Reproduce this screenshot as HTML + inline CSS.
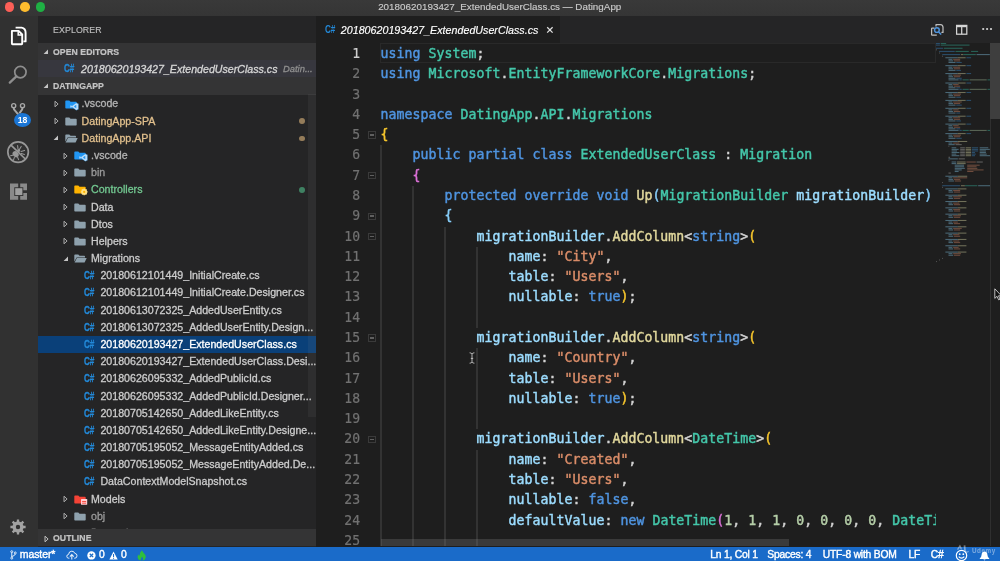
<!DOCTYPE html>
<html lang="en"><head><meta charset="utf-8"><title>20180620193427_ExtendedUserClass.cs — DatingApp</title>
<style>
html,body{margin:0;padding:0;background:#1e1e1e;}
body{width:1000px;height:561px;overflow:hidden;position:relative;font-family:"Liberation Sans",sans-serif;-webkit-font-smoothing:antialiased;}
.abs{position:absolute;}
#win{will-change:transform;position:absolute;left:0;top:0;width:1000px;height:561px;overflow:hidden;background:#1e1e1e;}
#title{position:absolute;left:0;top:0;width:1000px;height:15.5px;background:linear-gradient(#393939,#353535);}
#title .t{position:absolute;left:0;width:1000px;top:0;height:15.5px;line-height:14.2px;text-align:center;color:#cacaca;-webkit-text-stroke:0.15px;font-size:9.8px;letter-spacing:0.03px;text-indent:-0.5px;}
.tl{position:absolute;top:2.2px;width:9.6px;height:9.6px;border-radius:50%;}
#abar{position:absolute;left:0;top:15.5px;width:37.5px;height:531.0px;background:#313131;}
#side{position:absolute;left:37.5px;top:15.5px;width:278.1px;height:531.0px;background:#252526;overflow:hidden;}
.hdr{position:absolute;left:0;width:100%;background:#343435;color:#c4c4c4;font-weight:bold;font-size:8.7px;letter-spacing:0.05px;-webkit-text-stroke:0.2px;}
.hdr span{position:absolute;left:15.5px;top:0;}
.row{position:absolute;left:0;width:100%;height:17.18px;line-height:17.18px;font-size:10.65px;color:#cccccc;white-space:nowrap;-webkit-text-stroke:0.3px;}
.row .lbl{position:absolute;top:0;}
.cs{position:absolute;top:0;font-size:10.2px;font-weight:bold;color:#2389d8;letter-spacing:-0.2px;transform:scaleX(0.8);transform-origin:0 50%;}
.tw{position:absolute;width:0;height:0;}
#tabs{position:absolute;left:315.6px;top:15.5px;width:684.4px;height:27.700000000000003px;background:#252526;}
#tab{position:absolute;left:0;top:0;height:27.700000000000003px;width:244.7px;background:#1e1e1e;}
#editor{position:absolute;left:315.6px;top:43.2px;width:684.4px;height:503.3px;background:#1e1e1e;overflow:hidden;}
.ln{position:absolute;left:0;width:44.5px;text-align:right;color:#858585;font-family:"DejaVu Sans Mono","Liberation Mono",monospace;font-size:13.1px;height:20.29px;line-height:20.29px;-webkit-text-stroke:0.2px;transform:scaleY(1.08);transform-origin:50% 72%;}
.cl{position:absolute;left:65.0px;white-space:pre;font-family:"DejaVu Sans Mono","Liberation Mono",monospace;font-size:13.2px;letter-spacing:0.053px;height:20.29px;line-height:20.29px;color:#d4d4d4;-webkit-text-stroke:0.45px;}
.g{position:absolute;width:1.4px;background:#333333;}
.fold{position:absolute;left:52.9px;width:7.4px;height:7.4px;border:1px solid #3a3a3a;box-sizing:border-box;}
.fold:after{content:"";position:absolute;left:0.7px;right:0.7px;top:1.9px;height:1.6px;background:#606060;}
#status{position:absolute;left:0;top:546.5px;width:1000px;height:14.5px;background:#1a6bc9;color:#ffffff;font-size:10.3px;letter-spacing:-0.2px;white-space:nowrap;}
#status span{position:absolute;top:0;line-height:16.8px;-webkit-text-stroke:0.38px;}

.kw{color:#4f94e0}
.ty{color:#44c7aa}
.var{color:#9cdcfe}
.str{color:#d98c68}
.fn{color:#e0d79c}
.num{color:#b5cea8}
.w{color:#d4d4d4}
.b1{color:#f7c62c}
.b2{color:#da70d6}
.b3{color:#87cefa}
</style></head><body><div id="win">
<div id="title"><div class="tl" style="left:4.7px;background:#fc5f57"></div><div class="tl" style="left:20.2px;background:#fdbc2e"></div><div class="tl" style="left:35.7px;background:#1fb044"></div>
<div class="t">20180620193427_ExtendedUserClass.cs — DatingApp</div></div>
<div id="abar">
<svg class="abs" style="left:9.00px;top:9.20px;" width="20" height="21" viewBox="0 0 20 21"><path d="M6.6 2.6 L12.6 2.6 Q16.8 3.4 16.6 8 L16.6 16.4 L14.4 16.4" fill="none" stroke="#ffffff" stroke-width="1.9" stroke-linejoin="round"/><path d="M2.9 5.9 L9.6 5.9 L13.2 9.5 L13.2 18.6 Q13.2 19.2 12.6 19.2 L3.5 19.2 Q2.9 19.2 2.9 18.6 Z" fill="#313131" stroke="#ffffff" stroke-width="1.9" stroke-linejoin="round"/><path d="M9.2 6.2 L9.2 9.9 L13 9.9" fill="none" stroke="#ffffff" stroke-width="1.5"/></svg>
<svg class="abs" style="left:7.00px;top:46.10px;" width="24" height="24" viewBox="0 0 24 24"><circle cx="13.4" cy="10.1" r="5.7" fill="none" stroke="#8e8e8e" stroke-width="1.7"/><path d="M9.4 14.4 L2.8 20.6" stroke="#8e8e8e" stroke-width="2.3" stroke-linecap="round"/></svg>
<svg class="abs" style="left:8.00px;top:83.50px;" width="24" height="20" viewBox="0 0 24 20"><path d="M5.7 8.4 L6 10.4 L10.4 15.6 M14.5 8.4 L14.2 10.4 L11.4 14.4" fill="none" stroke="#a8a8a8" stroke-width="1.9" stroke-linejoin="round"/><circle cx="5.7" cy="6.7" r="2.05" fill="#313131" stroke="#a8a8a8" stroke-width="1.35"/><circle cx="14.5" cy="6.7" r="2.05" fill="#313131" stroke="#a8a8a8" stroke-width="1.35"/></svg>
<div class="abs" style="left:13.9px;top:97.8px;width:17.3px;height:14.2px;border-radius:50%;background:#1a76d6;color:#fff;font-size:8.7px;font-weight:bold;line-height:14.6px;text-align:center;letter-spacing:-0.1px">18</div>
<svg class="abs" style="left:6.00px;top:124.50px;" width="24" height="24" viewBox="0 0 24 24"><circle cx="12.1" cy="12.1" r="10.25" fill="none" stroke="#989898" stroke-width="1.7"/><path d="M5 5.2 L19.3 19" stroke="#989898" stroke-width="1.7"/><ellipse cx="9.6" cy="14.2" rx="2.7" ry="3.4" fill="#989898" transform="rotate(-42 9.6 14.2)"/><circle cx="12.6" cy="10.6" r="1.5" fill="#989898"/><path d="M13.4 9.4 L15.2 6.4 M12 9 L11.6 5.6 M15 11.4 L18.6 10.4 M15.4 13.4 L18.4 14.6 M6.8 15.2 L4.6 15.8 M8.4 17.4 L7.6 19.6 M11.6 17.2 L12.6 19.6" stroke="#989898" stroke-width="1.05" stroke-linecap="round"/></svg>
<svg class="abs" style="left:9.00px;top:166.50px;" width="20" height="20" viewBox="0 0 20 20"><path d="M1 1.4 H9.2 V5.3 H5.3 V13.9 H9.2 V17.8 H1 Z" fill="#8a8a8a"/><path d="M11.2 1.4 H18 V8.3 H14.3 V5.3 H11.2 Z" fill="#8a8a8a"/><path d="M18 10.9 V17.8 H11.2 V13.9 H14.3 V10.9 Z" fill="#8a8a8a"/><rect x="6.2" y="6.2" width="7.2" height="6.9" fill="#a0a0a0"/></svg>
<svg class="abs" style="left:8.00px;top:501.70px;" width="20" height="20" viewBox="0 0 20 20"><path d="M8.82 4.53 L8.86 2.39 L11.14 2.39 L11.18 4.53 L13.04 5.30 L14.57 3.81 L16.19 5.43 L14.70 6.96 L15.47 8.82 L17.61 8.86 L17.61 11.14 L15.47 11.18 L14.70 13.04 L16.19 14.57 L14.57 16.19 L13.04 14.70 L11.18 15.47 L11.14 17.61 L8.86 17.61 L8.82 15.47 L6.96 14.70 L5.43 16.19 L3.81 14.57 L5.30 13.04 L4.53 11.18 L2.39 11.14 L2.39 8.86 L4.53 8.82 L5.30 6.96 L3.81 5.43 L5.43 3.81 L6.96 5.30 Z M7.80 10.00 a2.20 2.20 0 1 0 4.40 0 a2.20 2.20 0 1 0 -4.40 0 Z" fill="#a2a2a2" fill-rule="evenodd"/></svg>
</div>
<div id="side">
<div class="abs" style="left:15.5px;top:8.3px;font-size:8.8px;color:#bdbdbd;letter-spacing:0.1px;line-height:12px;-webkit-text-stroke:0.15px;">EXPLORER</div>
<div class="hdr" style="top:27.9px;height:16.9px;line-height:18.3px"><svg class="abs" style="left:5.6px;top:5.9px" width="6" height="6" viewBox="0 0 6 6"><path d="M5 0.6 L5 5 L0.6 5 Z" fill="#c5c5c5"/></svg><span>OPEN EDITORS</span></div>
<div class="row" style="top:44.6px;background:#37373e;height:17.6px;line-height:18.1px">
<span class="cs" style="left:26.5px">C#</span><span class="lbl" style="left:43.6px;font-style:italic;color:#d6d6d6;letter-spacing:0px">20180620193427_ExtendedUserClass.cs</span>
<span class="lbl" style="left:245.5px;font-style:italic;color:#8f8f8f;font-size:9.4px">Datin...</span></div>
<div class="hdr" style="top:61.9px;height:17.2px;line-height:18.2px"><svg class="abs" style="left:5.6px;top:5.9px" width="6" height="6" viewBox="0 0 6 6"><path d="M5 0.6 L5 5 L0.6 5 Z" fill="#c5c5c5"/></svg><span>DATINGAPP</span></div>
<div class="abs" style="left:0;top:78.9px;width:100%;height:435.0px;overflow:hidden">
<div class="row" style="top:1.10px;">
<svg class="abs" style="left:16.4px;top:4.5px" width="6" height="8" viewBox="0 0 6 8"><path d="M1 1.2 L4.1 4 L1 6.8 Z" fill="none" stroke="#b0b0b0" stroke-width="0.95" stroke-linejoin="round"/></svg>
<span class="abs" style="left:27.2px;top:4.1px;line-height:0"><svg width="14" height="11" viewBox="0 0 14 11"><path d="M0.3 1.2 Q0.3 0.4 1.1 0.4 L4.3 0.4 L5.5 1.7 L10.9 1.7 Q11.7 1.7 11.7 2.5 L11.7 7.8 Q11.7 8.6 10.9 8.6 L1.1 8.6 Q0.3 8.6 0.3 7.8 Z" fill="#2196f3"/><path d="M11.2 2.9 L13.4 3.8 L13.4 9.3 L11.2 10.2 L7 6.9 L5.9 7.8 L5.2 7.4 L5.2 5.6 L5.9 5.2 L7 6.1 Z M11.1 5.1 L9 6.55 L11.1 8 Z" fill="#bfe0fb" stroke="#2196f3" stroke-width="0.3"/></svg></span>
<span class="lbl" style="left:44.1px;color:#b4b4b4">.vscode</span>
</div>
<div class="row" style="top:18.28px;">
<svg class="abs" style="left:16.4px;top:4.5px" width="6" height="8" viewBox="0 0 6 8"><path d="M1 1.2 L4.1 4 L1 6.8 Z" fill="none" stroke="#b0b0b0" stroke-width="0.95" stroke-linejoin="round"/></svg>
<span class="abs" style="left:27.2px;top:4.1px;line-height:0"><svg width="12" height="10" viewBox="0 0 12 10"><path d="M0.3 1.2 Q0.3 0.4 1.1 0.4 L4.3 0.4 L5.5 1.7 L10.9 1.7 Q11.7 1.7 11.7 2.5 L11.7 7.8 Q11.7 8.6 10.9 8.6 L1.1 8.6 Q0.3 8.6 0.3 7.8 Z" fill="#8ea1ad"/></svg></span>
<span class="lbl" style="left:44.1px;color:#e2c08d">DatingApp-SPA</span>
<span class="abs" style="left:261.5px;top:5.7px;width:5.8px;height:5.8px;border-radius:50%;background:#947c5a"></span>
</div>
<div class="row" style="top:35.46px;">
<svg class="abs" style="left:15.8px;top:5.6px" width="6" height="6" viewBox="0 0 6 6"><path d="M5 0.6 L5 5 L0.6 5 Z" fill="#c5c5c5"/></svg>
<span class="abs" style="left:27.2px;top:4.1px;line-height:0"><svg width="13" height="10" viewBox="0 0 13 10"><path d="M0.3 1.2 Q0.3 0.4 1.1 0.4 L4.3 0.4 L5.5 1.7 L10.3 1.7 Q11 1.7 11 2.5 L11 3.4 L2.6 3.4 L0.3 7.8 Z" fill="#8ea1ad"/><path d="M2.9 4.1 L12.7 4.1 L10.6 8.6 L0.6 8.6 Z" fill="#8ea1ad"/></svg></span>
<span class="lbl" style="left:44.1px;color:#e2c08d">DatingApp.API</span>
<span class="abs" style="left:261.5px;top:5.7px;width:5.8px;height:5.8px;border-radius:50%;background:#947c5a"></span>
</div>
<div class="row" style="top:52.64px;">
<svg class="abs" style="left:25.8px;top:4.5px" width="6" height="8" viewBox="0 0 6 8"><path d="M1 1.2 L4.1 4 L1 6.8 Z" fill="none" stroke="#b0b0b0" stroke-width="0.95" stroke-linejoin="round"/></svg>
<span class="abs" style="left:36.6px;top:4.1px;line-height:0"><svg width="14" height="11" viewBox="0 0 14 11"><path d="M0.3 1.2 Q0.3 0.4 1.1 0.4 L4.3 0.4 L5.5 1.7 L10.9 1.7 Q11.7 1.7 11.7 2.5 L11.7 7.8 Q11.7 8.6 10.9 8.6 L1.1 8.6 Q0.3 8.6 0.3 7.8 Z" fill="#2196f3"/><path d="M11.2 2.9 L13.4 3.8 L13.4 9.3 L11.2 10.2 L7 6.9 L5.9 7.8 L5.2 7.4 L5.2 5.6 L5.9 5.2 L7 6.1 Z M11.1 5.1 L9 6.55 L11.1 8 Z" fill="#bfe0fb" stroke="#2196f3" stroke-width="0.3"/></svg></span>
<span class="lbl" style="left:53.5px;color:#b4b4b4">.vscode</span>
</div>
<div class="row" style="top:69.82px;">
<svg class="abs" style="left:25.8px;top:4.5px" width="6" height="8" viewBox="0 0 6 8"><path d="M1 1.2 L4.1 4 L1 6.8 Z" fill="none" stroke="#b0b0b0" stroke-width="0.95" stroke-linejoin="round"/></svg>
<span class="abs" style="left:36.6px;top:4.1px;line-height:0"><svg width="12" height="10" viewBox="0 0 12 10"><path d="M0.3 1.2 Q0.3 0.4 1.1 0.4 L4.3 0.4 L5.5 1.7 L10.9 1.7 Q11.7 1.7 11.7 2.5 L11.7 7.8 Q11.7 8.6 10.9 8.6 L1.1 8.6 Q0.3 8.6 0.3 7.8 Z" fill="#8ea1ad"/></svg></span>
<span class="lbl" style="left:53.5px;color:#9a9a9a">bin</span>
</div>
<div class="row" style="top:87.00px;">
<svg class="abs" style="left:25.8px;top:4.5px" width="6" height="8" viewBox="0 0 6 8"><path d="M1 1.2 L4.1 4 L1 6.8 Z" fill="none" stroke="#b0b0b0" stroke-width="0.95" stroke-linejoin="round"/></svg>
<span class="abs" style="left:36.6px;top:4.1px;line-height:0"><svg width="14" height="11" viewBox="0 0 14 11"><path d="M0.3 1.2 Q0.3 0.4 1.1 0.4 L4.3 0.4 L5.5 1.7 L10.9 1.7 Q11.7 1.7 11.7 2.5 L11.7 7.8 Q11.7 8.6 10.9 8.6 L1.1 8.6 Q0.3 8.6 0.3 7.8 Z" fill="#ffb300"/><circle cx="10.2" cy="6.9" r="2.9" fill="#ffe082"/><circle cx="10.2" cy="6.9" r="1.1" fill="#ffb300"/><g stroke="#ffe082" stroke-width="1.3"><path d="M10.2 3.5 V10.3 M6.8 6.9 H13.6 M7.8 4.5 L12.6 9.3 M12.6 4.5 L7.8 9.3"/></g><circle cx="10.2" cy="6.9" r="1.1" fill="#ffb300"/></svg></span>
<span class="lbl" style="left:53.5px;color:#73c991">Controllers</span>
<span class="abs" style="left:261.5px;top:5.7px;width:5.8px;height:5.8px;border-radius:50%;background:#3f8162"></span>
</div>
<div class="row" style="top:104.18px;">
<svg class="abs" style="left:25.8px;top:4.5px" width="6" height="8" viewBox="0 0 6 8"><path d="M1 1.2 L4.1 4 L1 6.8 Z" fill="none" stroke="#b0b0b0" stroke-width="0.95" stroke-linejoin="round"/></svg>
<span class="abs" style="left:36.6px;top:4.1px;line-height:0"><svg width="12" height="10" viewBox="0 0 12 10"><path d="M0.3 1.2 Q0.3 0.4 1.1 0.4 L4.3 0.4 L5.5 1.7 L10.9 1.7 Q11.7 1.7 11.7 2.5 L11.7 7.8 Q11.7 8.6 10.9 8.6 L1.1 8.6 Q0.3 8.6 0.3 7.8 Z" fill="#8ea1ad"/></svg></span>
<span class="lbl" style="left:53.5px;color:#cccccc">Data</span>
</div>
<div class="row" style="top:121.36px;">
<svg class="abs" style="left:25.8px;top:4.5px" width="6" height="8" viewBox="0 0 6 8"><path d="M1 1.2 L4.1 4 L1 6.8 Z" fill="none" stroke="#b0b0b0" stroke-width="0.95" stroke-linejoin="round"/></svg>
<span class="abs" style="left:36.6px;top:4.1px;line-height:0"><svg width="12" height="10" viewBox="0 0 12 10"><path d="M0.3 1.2 Q0.3 0.4 1.1 0.4 L4.3 0.4 L5.5 1.7 L10.9 1.7 Q11.7 1.7 11.7 2.5 L11.7 7.8 Q11.7 8.6 10.9 8.6 L1.1 8.6 Q0.3 8.6 0.3 7.8 Z" fill="#8ea1ad"/></svg></span>
<span class="lbl" style="left:53.5px;color:#cccccc">Dtos</span>
</div>
<div class="row" style="top:138.54px;">
<svg class="abs" style="left:25.8px;top:4.5px" width="6" height="8" viewBox="0 0 6 8"><path d="M1 1.2 L4.1 4 L1 6.8 Z" fill="none" stroke="#b0b0b0" stroke-width="0.95" stroke-linejoin="round"/></svg>
<span class="abs" style="left:36.6px;top:4.1px;line-height:0"><svg width="12" height="10" viewBox="0 0 12 10"><path d="M0.3 1.2 Q0.3 0.4 1.1 0.4 L4.3 0.4 L5.5 1.7 L10.9 1.7 Q11.7 1.7 11.7 2.5 L11.7 7.8 Q11.7 8.6 10.9 8.6 L1.1 8.6 Q0.3 8.6 0.3 7.8 Z" fill="#8ea1ad"/></svg></span>
<span class="lbl" style="left:53.5px;color:#cccccc">Helpers</span>
</div>
<div class="row" style="top:155.72px;">
<svg class="abs" style="left:25.2px;top:5.6px" width="6" height="6" viewBox="0 0 6 6"><path d="M5 0.6 L5 5 L0.6 5 Z" fill="#c5c5c5"/></svg>
<span class="abs" style="left:36.6px;top:4.1px;line-height:0"><svg width="13" height="10" viewBox="0 0 13 10"><path d="M0.3 1.2 Q0.3 0.4 1.1 0.4 L4.3 0.4 L5.5 1.7 L10.3 1.7 Q11 1.7 11 2.5 L11 3.4 L2.6 3.4 L0.3 7.8 Z" fill="#8ea1ad"/><path d="M2.9 4.1 L12.7 4.1 L10.6 8.6 L0.6 8.6 Z" fill="#8ea1ad"/></svg></span>
<span class="lbl" style="left:53.5px;color:#cccccc">Migrations</span>
</div>
<div class="row" style="top:172.90px;">
<span class="cs" style="left:46.4px">C#</span>
<span class="lbl" style="left:62.9px;color:#cccccc">20180612101449_InitialCreate.cs</span>
</div>
<div class="row" style="top:190.08px;">
<span class="cs" style="left:46.4px">C#</span>
<span class="lbl" style="left:62.9px;color:#cccccc">20180612101449_InitialCreate.Designer.cs</span>
</div>
<div class="row" style="top:207.26px;">
<span class="cs" style="left:46.4px">C#</span>
<span class="lbl" style="left:62.9px;color:#cccccc">20180613072325_AddedUserEntity.cs</span>
</div>
<div class="row" style="top:224.44px;">
<span class="cs" style="left:46.4px">C#</span>
<span class="lbl" style="left:62.9px;color:#cccccc">20180613072325_AddedUserEntity.Design...</span>
</div>
<div class="row" style="top:241.62px;background:#0a4079;">
<span class="cs" style="left:46.4px">C#</span>
<span class="lbl" style="left:62.9px;color:#ffffff">20180620193427_ExtendedUserClass.cs</span>
</div>
<div class="row" style="top:258.80px;">
<span class="cs" style="left:46.4px">C#</span>
<span class="lbl" style="left:62.9px;color:#cccccc">20180620193427_ExtendedUserClass.Desi...</span>
</div>
<div class="row" style="top:275.98px;">
<span class="cs" style="left:46.4px">C#</span>
<span class="lbl" style="left:62.9px;color:#cccccc">20180626095332_AddedPublicId.cs</span>
</div>
<div class="row" style="top:293.16px;">
<span class="cs" style="left:46.4px">C#</span>
<span class="lbl" style="left:62.9px;color:#cccccc">20180626095332_AddedPublicId.Designer...</span>
</div>
<div class="row" style="top:310.34px;">
<span class="cs" style="left:46.4px">C#</span>
<span class="lbl" style="left:62.9px;color:#cccccc">20180705142650_AddedLikeEntity.cs</span>
</div>
<div class="row" style="top:327.52px;">
<span class="cs" style="left:46.4px">C#</span>
<span class="lbl" style="left:62.9px;color:#cccccc">20180705142650_AddedLikeEntity.Designe...</span>
</div>
<div class="row" style="top:344.70px;">
<span class="cs" style="left:46.4px">C#</span>
<span class="lbl" style="left:62.9px;color:#cccccc">20180705195052_MessageEntityAdded.cs</span>
</div>
<div class="row" style="top:361.88px;">
<span class="cs" style="left:46.4px">C#</span>
<span class="lbl" style="left:62.9px;color:#cccccc">20180705195052_MessageEntityAdded.De...</span>
</div>
<div class="row" style="top:379.06px;">
<span class="cs" style="left:46.4px">C#</span>
<span class="lbl" style="left:62.9px;color:#cccccc">DataContextModelSnapshot.cs</span>
</div>
<div class="row" style="top:396.24px;">
<svg class="abs" style="left:25.8px;top:4.5px" width="6" height="8" viewBox="0 0 6 8"><path d="M1 1.2 L4.1 4 L1 6.8 Z" fill="none" stroke="#b0b0b0" stroke-width="0.95" stroke-linejoin="round"/></svg>
<span class="abs" style="left:36.6px;top:4.1px;line-height:0"><svg width="14" height="11" viewBox="0 0 14 11"><path d="M0.3 1.2 Q0.3 0.4 1.1 0.4 L4.3 0.4 L5.5 1.7 L10.9 1.7 Q11.7 1.7 11.7 2.5 L11.7 7.8 Q11.7 8.6 10.9 8.6 L1.1 8.6 Q0.3 8.6 0.3 7.8 Z" fill="#f44336"/><rect x="7" y="4" width="6.2" height="5.8" rx="0.6" fill="#ffcdd2"/><rect x="8.1" y="6" width="4" height="0.9" fill="#f44336"/><rect x="8.1" y="7.7" width="4" height="0.9" fill="#f44336"/></svg></span>
<span class="lbl" style="left:53.5px;color:#cccccc">Models</span>
</div>
<div class="row" style="top:413.42px;">
<svg class="abs" style="left:25.8px;top:4.5px" width="6" height="8" viewBox="0 0 6 8"><path d="M1 1.2 L4.1 4 L1 6.8 Z" fill="none" stroke="#b0b0b0" stroke-width="0.95" stroke-linejoin="round"/></svg>
<span class="abs" style="left:36.6px;top:4.1px;line-height:0"><svg width="12" height="10" viewBox="0 0 12 10"><path d="M0.3 1.2 Q0.3 0.4 1.1 0.4 L4.3 0.4 L5.5 1.7 L10.9 1.7 Q11.7 1.7 11.7 2.5 L11.7 7.8 Q11.7 8.6 10.9 8.6 L1.1 8.6 Q0.3 8.6 0.3 7.8 Z" fill="#8ea1ad"/></svg></span>
<span class="lbl" style="left:53.5px;color:#9a9a9a">obj</span>
</div>
<div class="row" style="top:430.60px;">
<svg class="abs" style="left:25.8px;top:4.5px" width="6" height="8" viewBox="0 0 6 8"><path d="M1 1.2 L4.1 4 L1 6.8 Z" fill="none" stroke="#b0b0b0" stroke-width="0.95" stroke-linejoin="round"/></svg>
<span class="abs" style="left:36.6px;top:4.1px;line-height:0"><svg width="12" height="10" viewBox="0 0 12 10"><path d="M0.3 1.2 Q0.3 0.4 1.1 0.4 L4.3 0.4 L5.5 1.7 L10.9 1.7 Q11.7 1.7 11.7 2.5 L11.7 7.8 Q11.7 8.6 10.9 8.6 L1.1 8.6 Q0.3 8.6 0.3 7.8 Z" fill="#8ea1ad"/></svg></span>
<span class="lbl" style="left:53.5px;color:#cccccc">Properties</span>
</div>
</div>
<div class="abs" style="left:270.5px;top:78.9px;width:7.6px;height:323.1px;background:rgba(140,140,140,0.09)"></div>
<div class="hdr" style="top:513.9px;height:17.1px;line-height:18.3px"><svg class="abs" style="left:6.0px;top:5.2px" width="6" height="8" viewBox="0 0 6 8"><path d="M1 1.2 L4.1 4 L1 6.8 Z" fill="none" stroke="#c5c5c5" stroke-width="0.95" stroke-linejoin="round"/></svg><span>OUTLINE</span></div>
</div>
<div id="tabs"><div id="tab">
<span class="cs" style="left:9.1px;top:0;line-height:28.6px;">C#</span>
<span class="abs" style="left:25.2px;top:0;line-height:28.6px;font-size:10.7px;font-style:italic;color:#ffffff;letter-spacing:0.01px;white-space:nowrap;-webkit-text-stroke:0.15px">20180620193427_ExtendedUserClass.cs</span>
<svg class="abs" style="left:230.1px;top:10.5px" width="8" height="8" viewBox="0 0 8 8"><path d="M1.2 1.2 L6.6 6.6 M6.6 1.2 L1.2 6.6" stroke="#e0e0e0" stroke-width="1.25"/></svg>
</div>
<svg class="abs" style="left:614.20px;top:7.70px;" width="15" height="14" viewBox="0 0 15 14"><path d="M6 3.6 V1.6 H10.6 Q12.9 1.8 13 4.2 V9.4 H11.4" fill="none" stroke="#bdbdbd" stroke-width="1.25" stroke-linejoin="round"/><path d="M4.4 5 H2.2 Q1.6 5 1.6 5.6 V11.6 Q1.6 12.2 2.2 12.2 H6.8" fill="none" stroke="#bdbdbd" stroke-width="1.25"/><circle cx="6.9" cy="7" r="2.35" fill="none" stroke="#4f94dc" stroke-width="1.45"/><path d="M8.7 8.9 L11.2 11.5" stroke="#4f94dc" stroke-width="1.5"/></svg>
<svg class="abs" style="left:639.40px;top:8.70px;" width="14" height="12" viewBox="0 0 14 12"><rect x="1.6" y="1.4" width="10.2" height="8.8" fill="none" stroke="#d4d4d4" stroke-width="1.25"/><path d="M1.6 2.1 H11.8" stroke="#d4d4d4" stroke-width="2.2"/><path d="M6.7 1.4 V10.2" stroke="#d4d4d4" stroke-width="1.25"/></svg>
<svg class="abs" style="left:665.40px;top:11.90px;" width="13" height="4" viewBox="0 0 13 4"><circle cx="2.2" cy="2" r="1.12" fill="#d4d4d4"/><circle cx="6.1" cy="2" r="1.12" fill="#d4d4d4"/><circle cx="10" cy="2" r="1.12" fill="#d4d4d4"/></svg>
</div>
<div id="editor">
<div class="abs" style="left:64.1px;top:0.0px;width:556.3px;height:20.2px;border:1.7px solid #292929;box-sizing:border-box"></div>
<div class="g" style="left:64.7px;top:102.25px;height:20.29px"></div>
<div class="g" style="left:64.7px;top:122.54px;height:20.29px"></div>
<div class="g" style="left:64.7px;top:142.83px;height:20.29px"></div>
<div class="g" style="left:96.7px;top:142.83px;height:20.29px"></div>
<div class="g" style="left:64.7px;top:163.12px;height:20.29px"></div>
<div class="g" style="left:96.7px;top:163.12px;height:20.29px"></div>
<div class="g" style="left:64.7px;top:183.41px;height:20.29px"></div>
<div class="g" style="left:96.7px;top:183.41px;height:20.29px"></div>
<div class="g" style="left:128.7px;top:183.41px;height:20.29px"></div>
<div class="g" style="left:64.7px;top:203.70px;height:20.29px"></div>
<div class="g" style="left:96.7px;top:203.70px;height:20.29px"></div>
<div class="g" style="left:128.7px;top:203.70px;height:20.29px"></div>
<div class="g" style="left:160.7px;top:203.70px;height:20.29px"></div>
<div class="g" style="left:64.7px;top:223.99px;height:20.29px"></div>
<div class="g" style="left:96.7px;top:223.99px;height:20.29px"></div>
<div class="g" style="left:128.7px;top:223.99px;height:20.29px"></div>
<div class="g" style="left:160.7px;top:223.99px;height:20.29px"></div>
<div class="g" style="left:64.7px;top:244.28px;height:20.29px"></div>
<div class="g" style="left:96.7px;top:244.28px;height:20.29px"></div>
<div class="g" style="left:128.7px;top:244.28px;height:20.29px"></div>
<div class="g" style="left:160.7px;top:244.28px;height:20.29px"></div>
<div class="g" style="left:64.7px;top:264.57px;height:20.29px"></div>
<div class="g" style="left:96.7px;top:264.57px;height:20.29px"></div>
<div class="g" style="left:128.7px;top:264.57px;height:20.29px"></div>
<div class="g" style="left:160.7px;top:264.57px;height:20.29px"></div>
<div class="g" style="left:64.7px;top:284.86px;height:20.29px"></div>
<div class="g" style="left:96.7px;top:284.86px;height:20.29px"></div>
<div class="g" style="left:128.7px;top:284.86px;height:20.29px"></div>
<div class="g" style="left:64.7px;top:305.15px;height:20.29px"></div>
<div class="g" style="left:96.7px;top:305.15px;height:20.29px"></div>
<div class="g" style="left:128.7px;top:305.15px;height:20.29px"></div>
<div class="g" style="left:160.7px;top:305.15px;height:20.29px"></div>
<div class="g" style="left:64.7px;top:325.44px;height:20.29px"></div>
<div class="g" style="left:96.7px;top:325.44px;height:20.29px"></div>
<div class="g" style="left:128.7px;top:325.44px;height:20.29px"></div>
<div class="g" style="left:160.7px;top:325.44px;height:20.29px"></div>
<div class="g" style="left:64.7px;top:345.73px;height:20.29px"></div>
<div class="g" style="left:96.7px;top:345.73px;height:20.29px"></div>
<div class="g" style="left:128.7px;top:345.73px;height:20.29px"></div>
<div class="g" style="left:160.7px;top:345.73px;height:20.29px"></div>
<div class="g" style="left:64.7px;top:366.02px;height:20.29px"></div>
<div class="g" style="left:96.7px;top:366.02px;height:20.29px"></div>
<div class="g" style="left:128.7px;top:366.02px;height:20.29px"></div>
<div class="g" style="left:160.7px;top:366.02px;height:20.29px"></div>
<div class="g" style="left:64.7px;top:386.31px;height:20.29px"></div>
<div class="g" style="left:96.7px;top:386.31px;height:20.29px"></div>
<div class="g" style="left:128.7px;top:386.31px;height:20.29px"></div>
<div class="g" style="left:64.7px;top:406.60px;height:20.29px"></div>
<div class="g" style="left:96.7px;top:406.60px;height:20.29px"></div>
<div class="g" style="left:128.7px;top:406.60px;height:20.29px"></div>
<div class="g" style="left:160.7px;top:406.60px;height:20.29px"></div>
<div class="g" style="left:64.7px;top:426.89px;height:20.29px"></div>
<div class="g" style="left:96.7px;top:426.89px;height:20.29px"></div>
<div class="g" style="left:128.7px;top:426.89px;height:20.29px"></div>
<div class="g" style="left:160.7px;top:426.89px;height:20.29px"></div>
<div class="g" style="left:64.7px;top:447.18px;height:20.29px"></div>
<div class="g" style="left:96.7px;top:447.18px;height:20.29px"></div>
<div class="g" style="left:128.7px;top:447.18px;height:20.29px"></div>
<div class="g" style="left:160.7px;top:447.18px;height:20.29px"></div>
<div class="g" style="left:64.7px;top:467.47px;height:20.29px"></div>
<div class="g" style="left:96.7px;top:467.47px;height:20.29px"></div>
<div class="g" style="left:128.7px;top:467.47px;height:20.29px"></div>
<div class="g" style="left:160.7px;top:467.47px;height:20.29px"></div>
<div class="g" style="left:64.7px;top:487.76px;height:20.29px"></div>
<div class="g" style="left:96.7px;top:487.76px;height:20.29px"></div>
<div class="g" style="left:128.7px;top:487.76px;height:20.29px"></div>
<div class="g" style="left:160.7px;top:487.76px;height:20.29px"></div>
<div class="ln" style="top:0.80px;color:#cfcfcf">1</div>
<div class="cl" style="top:0.80px"><span class="kw">using</span> <span class="ty">System</span>;</div>
<div class="ln" style="top:21.09px;color:#717171">2</div>
<div class="cl" style="top:21.09px"><span class="kw">using</span> <span class="ty">Microsoft</span>.<span class="ty">EntityFrameworkCore</span>.<span class="ty">Migrations</span>;</div>
<div class="ln" style="top:41.38px;color:#717171">3</div>
<div class="ln" style="top:61.67px;color:#717171">4</div>
<div class="cl" style="top:61.67px"><span class="kw">namespace</span> <span class="ty">DatingApp</span>.<span class="ty">API</span>.<span class="ty">Migrations</span></div>
<div class="ln" style="top:81.96px;color:#717171">5</div>
<div class="fold" style="top:88.20px"></div>
<div class="cl" style="top:81.96px"><span class="b1">{</span></div>
<div class="ln" style="top:102.25px;color:#717171">6</div>
<div class="cl" style="top:102.25px">    <span class="kw">public</span> <span class="kw">partial</span> <span class="kw">class</span> <span class="ty">ExtendedUserClass</span> : <span class="ty">Migration</span></div>
<div class="ln" style="top:122.54px;color:#717171">7</div>
<div class="fold" style="top:128.78px"></div>
<div class="cl" style="top:122.54px">    <span class="b2">{</span></div>
<div class="ln" style="top:142.83px;color:#717171">8</div>
<div class="cl" style="top:142.83px">        <span class="kw">protected</span> <span class="kw">override</span> <span class="kw">void</span> <span class="fn">Up</span><span class="b3">(</span><span class="ty">MigrationBuilder</span> <span class="var">migrationBuilder</span><span class="b3">)</span></div>
<div class="ln" style="top:163.12px;color:#717171">9</div>
<div class="fold" style="top:169.37px"></div>
<div class="cl" style="top:163.12px">        <span class="b3">{</span></div>
<div class="ln" style="top:183.41px;color:#717171">10</div>
<div class="fold" style="top:189.65px"></div>
<div class="cl" style="top:183.41px">            <span class="var">migrationBuilder</span>.<span class="fn">AddColumn</span>&lt;<span class="kw">string</span>&gt;<span class="b1">(</span></div>
<div class="ln" style="top:203.70px;color:#717171">11</div>
<div class="cl" style="top:203.70px">                <span class="var">name</span>: <span class="str">"City"</span>,</div>
<div class="ln" style="top:223.99px;color:#717171">12</div>
<div class="cl" style="top:223.99px">                <span class="var">table</span>: <span class="str">"Users"</span>,</div>
<div class="ln" style="top:244.28px;color:#717171">13</div>
<div class="cl" style="top:244.28px">                <span class="var">nullable</span>: <span class="kw">true</span><span class="b1">)</span>;</div>
<div class="ln" style="top:264.57px;color:#717171">14</div>
<div class="ln" style="top:284.86px;color:#717171">15</div>
<div class="fold" style="top:291.11px"></div>
<div class="cl" style="top:284.86px">            <span class="var">migrationBuilder</span>.<span class="fn">AddColumn</span>&lt;<span class="kw">string</span>&gt;<span class="b1">(</span></div>
<div class="ln" style="top:305.15px;color:#717171">16</div>
<div class="cl" style="top:305.15px">                <span class="var">name</span>: <span class="str">"Country"</span>,</div>
<div class="ln" style="top:325.44px;color:#717171">17</div>
<div class="cl" style="top:325.44px">                <span class="var">table</span>: <span class="str">"Users"</span>,</div>
<div class="ln" style="top:345.73px;color:#717171">18</div>
<div class="cl" style="top:345.73px">                <span class="var">nullable</span>: <span class="kw">true</span><span class="b1">)</span>;</div>
<div class="ln" style="top:366.02px;color:#717171">19</div>
<div class="ln" style="top:386.31px;color:#717171">20</div>
<div class="fold" style="top:392.56px"></div>
<div class="cl" style="top:386.31px">            <span class="var">migrationBuilder</span>.<span class="fn">AddColumn</span>&lt;<span class="ty">DateTime</span>&gt;<span class="b1">(</span></div>
<div class="ln" style="top:406.60px;color:#717171">21</div>
<div class="cl" style="top:406.60px">                <span class="var">name</span>: <span class="str">"Created"</span>,</div>
<div class="ln" style="top:426.89px;color:#717171">22</div>
<div class="cl" style="top:426.89px">                <span class="var">table</span>: <span class="str">"Users"</span>,</div>
<div class="ln" style="top:447.18px;color:#717171">23</div>
<div class="cl" style="top:447.18px">                <span class="var">nullable</span>: <span class="kw">false</span>,</div>
<div class="ln" style="top:467.47px;color:#717171">24</div>
<div class="cl" style="top:467.47px">                <span class="var">defaultValue</span>: <span class="kw">new</span> <span class="ty">DateTime</span><span class="b2">(</span><span class="num">1</span>, <span class="num">1</span>, <span class="num">1</span>, <span class="num">0</span>, <span class="num">0</span>, <span class="num">0</span>, <span class="num">0</span>, <span class="ty">DateTimeKind</span>.<span class="ty">Unspecified</span><span class="b2">)</span>,</div>
<div class="ln" style="top:487.76px;color:#717171">25</div>
<div class="abs" style="left:620.4px;top:0;width:64.0px;height:503.3px;background:#1e1e1e"></div>
<svg class="abs" style="left:620.70px;top:0.30px;opacity:0.74" width="54" height="220.6" viewBox="0 0 54 220.6"><rect x="0.00" y="0.00" width="3.90" height="1.05" fill="#2f5f86"/><rect x="4.68" y="0.00" width="5.46" height="1.05" fill="#2c7a6c"/><rect x="0.00" y="1.58" width="3.90" height="1.05" fill="#2f5f86"/><rect x="4.68" y="1.58" width="28.86" height="1.05" fill="#2c7a6c"/><rect x="0.00" y="4.74" width="7.02" height="1.05" fill="#2f5f86"/><rect x="7.80" y="4.74" width="18.72" height="1.05" fill="#2c7a6c"/><rect x="0.00" y="6.32" width="0.78" height="1.05" fill="#777777"/><rect x="3.12" y="7.90" width="15.60" height="1.05" fill="#2f5f86"/><rect x="19.50" y="7.90" width="13.26" height="1.05" fill="#2c7a6c"/><rect x="35.10" y="7.90" width="7.02" height="1.05" fill="#2c7a6c"/><rect x="3.12" y="9.48" width="0.78" height="1.05" fill="#777777"/><rect x="6.24" y="11.06" width="17.94" height="1.05" fill="#2f5f86"/><rect x="24.96" y="11.06" width="2.34" height="1.05" fill="#8c8c6e"/><rect x="27.30" y="11.06" width="12.48" height="1.05" fill="#2c7a6c"/><rect x="40.56" y="11.06" width="13.26" height="1.05" fill="#5a8296"/><rect x="6.24" y="12.64" width="0.78" height="1.05" fill="#777777"/><rect x="9.36" y="14.22" width="12.48" height="1.05" fill="#5a8296"/><rect x="21.84" y="14.22" width="7.80" height="1.05" fill="#8c8c6e"/><rect x="30.42" y="14.22" width="4.68" height="1.05" fill="#2f5f86"/><rect x="12.48" y="15.80" width="3.90" height="1.05" fill="#5a8296"/><rect x="17.16" y="15.80" width="7.02" height="1.05" fill="#8a5c49"/><rect x="12.48" y="17.38" width="4.68" height="1.05" fill="#5a8296"/><rect x="17.94" y="17.38" width="6.24" height="1.05" fill="#8a5c49"/><rect x="12.48" y="18.96" width="7.02" height="1.05" fill="#5a8296"/><rect x="20.28" y="18.96" width="5.46" height="1.05" fill="#2f5f86"/><rect x="9.36" y="22.12" width="12.48" height="1.05" fill="#5a8296"/><rect x="21.84" y="22.12" width="7.80" height="1.05" fill="#8c8c6e"/><rect x="30.42" y="22.12" width="4.68" height="1.05" fill="#2f5f86"/><rect x="12.48" y="23.70" width="3.90" height="1.05" fill="#5a8296"/><rect x="17.16" y="23.70" width="7.02" height="1.05" fill="#8a5c49"/><rect x="12.48" y="25.28" width="4.68" height="1.05" fill="#5a8296"/><rect x="17.94" y="25.28" width="6.24" height="1.05" fill="#8a5c49"/><rect x="12.48" y="26.86" width="7.02" height="1.05" fill="#5a8296"/><rect x="20.28" y="26.86" width="4.68" height="1.05" fill="#2f5f86"/><rect x="9.36" y="30.02" width="12.48" height="1.05" fill="#5a8296"/><rect x="21.84" y="30.02" width="7.80" height="1.05" fill="#8c8c6e"/><rect x="30.42" y="30.02" width="4.68" height="1.05" fill="#2f5f86"/><rect x="12.48" y="31.60" width="3.90" height="1.05" fill="#5a8296"/><rect x="17.16" y="31.60" width="7.80" height="1.05" fill="#8a5c49"/><rect x="12.48" y="33.18" width="4.68" height="1.05" fill="#5a8296"/><rect x="17.94" y="33.18" width="6.24" height="1.05" fill="#8a5c49"/><rect x="12.48" y="34.76" width="7.02" height="1.05" fill="#5a8296"/><rect x="20.28" y="34.76" width="5.46" height="1.05" fill="#2f5f86"/><rect x="12.48" y="36.34" width="10.14" height="1.05" fill="#5a8296"/><rect x="23.40" y="36.34" width="2.34" height="1.05" fill="#2f5f86"/><rect x="26.52" y="36.34" width="6.24" height="1.05" fill="#2c7a6c"/><rect x="33.54" y="36.34" width="17.16" height="1.05" fill="#70806a"/><rect x="51.48" y="36.34" width="2.52" height="1.05" fill="#2c7a6c"/><rect x="9.36" y="39.50" width="12.48" height="1.05" fill="#5a8296"/><rect x="21.84" y="39.50" width="7.80" height="1.05" fill="#8c8c6e"/><rect x="30.42" y="39.50" width="4.68" height="1.05" fill="#2f5f86"/><rect x="12.48" y="41.08" width="3.90" height="1.05" fill="#5a8296"/><rect x="17.16" y="41.08" width="5.46" height="1.05" fill="#8a5c49"/><rect x="12.48" y="42.66" width="4.68" height="1.05" fill="#5a8296"/><rect x="17.94" y="42.66" width="6.24" height="1.05" fill="#8a5c49"/><rect x="12.48" y="44.24" width="7.02" height="1.05" fill="#5a8296"/><rect x="20.28" y="44.24" width="3.90" height="1.05" fill="#2f5f86"/><rect x="12.48" y="45.82" width="10.14" height="1.05" fill="#5a8296"/><rect x="23.40" y="45.82" width="2.34" height="1.05" fill="#2f5f86"/><rect x="26.52" y="45.82" width="6.24" height="1.05" fill="#2c7a6c"/><rect x="33.54" y="45.82" width="17.16" height="1.05" fill="#70806a"/><rect x="51.48" y="45.82" width="2.52" height="1.05" fill="#2c7a6c"/><rect x="9.36" y="48.98" width="12.48" height="1.05" fill="#5a8296"/><rect x="21.84" y="48.98" width="7.80" height="1.05" fill="#8c8c6e"/><rect x="30.42" y="48.98" width="4.68" height="1.05" fill="#2f5f86"/><rect x="12.48" y="50.56" width="3.90" height="1.05" fill="#5a8296"/><rect x="17.16" y="50.56" width="7.80" height="1.05" fill="#8a5c49"/><rect x="12.48" y="52.14" width="4.68" height="1.05" fill="#5a8296"/><rect x="17.94" y="52.14" width="6.24" height="1.05" fill="#8a5c49"/><rect x="12.48" y="53.72" width="7.02" height="1.05" fill="#5a8296"/><rect x="20.28" y="53.72" width="4.68" height="1.05" fill="#2f5f86"/><rect x="9.36" y="56.88" width="12.48" height="1.05" fill="#5a8296"/><rect x="21.84" y="56.88" width="7.80" height="1.05" fill="#8c8c6e"/><rect x="30.42" y="56.88" width="4.68" height="1.05" fill="#2f5f86"/><rect x="12.48" y="58.46" width="3.90" height="1.05" fill="#5a8296"/><rect x="17.16" y="58.46" width="8.58" height="1.05" fill="#8a5c49"/><rect x="12.48" y="60.04" width="4.68" height="1.05" fill="#5a8296"/><rect x="17.94" y="60.04" width="6.24" height="1.05" fill="#8a5c49"/><rect x="12.48" y="61.62" width="7.02" height="1.05" fill="#5a8296"/><rect x="20.28" y="61.62" width="5.46" height="1.05" fill="#2f5f86"/><rect x="9.36" y="64.78" width="12.48" height="1.05" fill="#5a8296"/><rect x="21.84" y="64.78" width="7.80" height="1.05" fill="#8c8c6e"/><rect x="30.42" y="64.78" width="4.68" height="1.05" fill="#2f5f86"/><rect x="12.48" y="66.36" width="3.90" height="1.05" fill="#5a8296"/><rect x="17.16" y="66.36" width="5.46" height="1.05" fill="#8a5c49"/><rect x="12.48" y="67.94" width="4.68" height="1.05" fill="#5a8296"/><rect x="17.94" y="67.94" width="6.24" height="1.05" fill="#8a5c49"/><rect x="12.48" y="69.52" width="7.02" height="1.05" fill="#5a8296"/><rect x="20.28" y="69.52" width="3.90" height="1.05" fill="#2f5f86"/><rect x="9.36" y="72.68" width="12.48" height="1.05" fill="#5a8296"/><rect x="21.84" y="72.68" width="7.80" height="1.05" fill="#8c8c6e"/><rect x="30.42" y="72.68" width="4.68" height="1.05" fill="#2f5f86"/><rect x="12.48" y="74.26" width="3.90" height="1.05" fill="#5a8296"/><rect x="17.16" y="74.26" width="7.02" height="1.05" fill="#8a5c49"/><rect x="12.48" y="75.84" width="4.68" height="1.05" fill="#5a8296"/><rect x="17.94" y="75.84" width="6.24" height="1.05" fill="#8a5c49"/><rect x="12.48" y="77.42" width="7.02" height="1.05" fill="#5a8296"/><rect x="20.28" y="77.42" width="4.68" height="1.05" fill="#2f5f86"/><rect x="9.36" y="80.58" width="12.48" height="1.05" fill="#5a8296"/><rect x="21.84" y="80.58" width="7.80" height="1.05" fill="#8c8c6e"/><rect x="30.42" y="80.58" width="4.68" height="1.05" fill="#2f5f86"/><rect x="12.48" y="82.16" width="3.90" height="1.05" fill="#5a8296"/><rect x="17.16" y="82.16" width="5.46" height="1.05" fill="#8a5c49"/><rect x="12.48" y="83.74" width="4.68" height="1.05" fill="#5a8296"/><rect x="17.94" y="83.74" width="6.24" height="1.05" fill="#8a5c49"/><rect x="12.48" y="85.32" width="7.02" height="1.05" fill="#5a8296"/><rect x="20.28" y="85.32" width="3.90" height="1.05" fill="#2f5f86"/><rect x="12.48" y="86.90" width="10.14" height="1.05" fill="#5a8296"/><rect x="23.40" y="86.90" width="2.34" height="1.05" fill="#2f5f86"/><rect x="26.52" y="86.90" width="6.24" height="1.05" fill="#2c7a6c"/><rect x="33.54" y="86.90" width="17.16" height="1.05" fill="#70806a"/><rect x="51.48" y="86.90" width="2.52" height="1.05" fill="#2c7a6c"/><rect x="9.36" y="90.06" width="12.48" height="1.05" fill="#5a8296"/><rect x="21.84" y="90.06" width="7.80" height="1.05" fill="#8c8c6e"/><rect x="30.42" y="90.06" width="4.68" height="1.05" fill="#2f5f86"/><rect x="12.48" y="91.64" width="3.90" height="1.05" fill="#5a8296"/><rect x="17.16" y="91.64" width="7.80" height="1.05" fill="#8a5c49"/><rect x="12.48" y="93.22" width="4.68" height="1.05" fill="#5a8296"/><rect x="17.94" y="93.22" width="6.24" height="1.05" fill="#8a5c49"/><rect x="12.48" y="94.80" width="7.02" height="1.05" fill="#5a8296"/><rect x="20.28" y="94.80" width="5.46" height="1.05" fill="#2f5f86"/><rect x="9.36" y="97.96" width="12.48" height="1.05" fill="#5a8296"/><rect x="21.84" y="97.96" width="9.36" height="1.05" fill="#8c8c6e"/><rect x="12.48" y="99.54" width="3.90" height="1.05" fill="#5a8296"/><rect x="17.16" y="99.54" width="6.24" height="1.05" fill="#8a5c49"/><rect x="12.48" y="101.12" width="6.24" height="1.05" fill="#5a8296"/><rect x="19.50" y="101.12" width="6.24" height="1.05" fill="#777777"/><rect x="12.48" y="102.70" width="0.78" height="1.05" fill="#777777"/><rect x="15.60" y="104.28" width="4.68" height="1.05" fill="#5a8296"/><rect x="24.18" y="104.28" width="4.68" height="1.05" fill="#777777"/><rect x="29.64" y="104.28" width="5.46" height="1.05" fill="#8c8c6e"/><rect x="35.88" y="104.28" width="6.24" height="1.05" fill="#2f5f86"/><rect x="43.68" y="104.28" width="8.58" height="1.05" fill="#5a8296"/><rect x="15.60" y="105.86" width="7.02" height="1.05" fill="#5a8296"/><rect x="24.18" y="105.86" width="4.68" height="1.05" fill="#777777"/><rect x="29.64" y="105.86" width="5.46" height="1.05" fill="#8c8c6e"/><rect x="35.88" y="105.86" width="6.24" height="1.05" fill="#2f5f86"/><rect x="43.68" y="105.86" width="10.14" height="1.05" fill="#5a8296"/><rect x="15.60" y="107.44" width="5.46" height="1.05" fill="#5a8296"/><rect x="24.18" y="107.44" width="4.68" height="1.05" fill="#777777"/><rect x="29.64" y="107.44" width="5.46" height="1.05" fill="#8c8c6e"/><rect x="35.88" y="107.44" width="6.24" height="1.05" fill="#2f5f86"/><rect x="43.68" y="107.44" width="6.24" height="1.05" fill="#5a8296"/><rect x="15.60" y="109.02" width="7.80" height="1.05" fill="#5a8296"/><rect x="24.18" y="109.02" width="4.68" height="1.05" fill="#777777"/><rect x="29.64" y="109.02" width="5.46" height="1.05" fill="#8c8c6e"/><rect x="35.88" y="109.02" width="3.12" height="1.05" fill="#2f5f86"/><rect x="43.68" y="109.02" width="6.24" height="1.05" fill="#5a8296"/><rect x="15.60" y="110.60" width="4.68" height="1.05" fill="#5a8296"/><rect x="24.18" y="110.60" width="4.68" height="1.05" fill="#777777"/><rect x="29.64" y="110.60" width="5.46" height="1.05" fill="#8c8c6e"/><rect x="35.88" y="110.60" width="3.90" height="1.05" fill="#2f5f86"/><rect x="43.68" y="110.60" width="7.02" height="1.05" fill="#5a8296"/><rect x="15.60" y="112.18" width="7.80" height="1.05" fill="#5a8296"/><rect x="24.18" y="112.18" width="4.68" height="1.05" fill="#777777"/><rect x="29.64" y="112.18" width="5.46" height="1.05" fill="#8c8c6e"/><rect x="35.88" y="112.18" width="3.12" height="1.05" fill="#2f5f86"/><rect x="43.68" y="112.18" width="10.32" height="1.05" fill="#5a8296"/><rect x="12.48" y="113.76" width="1.56" height="1.05" fill="#777777"/><rect x="12.48" y="115.34" width="9.36" height="1.05" fill="#5a8296"/><rect x="22.62" y="115.34" width="6.24" height="1.05" fill="#777777"/><rect x="12.48" y="116.92" width="0.78" height="1.05" fill="#777777"/><rect x="15.60" y="118.50" width="4.68" height="1.05" fill="#5a8296"/><rect x="21.06" y="118.50" width="8.58" height="1.05" fill="#8c8c6e"/><rect x="30.42" y="118.50" width="9.36" height="1.05" fill="#8a5c49"/><rect x="40.56" y="118.50" width="6.24" height="1.05" fill="#777777"/><rect x="15.60" y="120.08" width="4.68" height="1.05" fill="#5a8296"/><rect x="21.06" y="120.08" width="8.58" height="1.05" fill="#8c8c6e"/><rect x="18.72" y="121.66" width="9.36" height="1.05" fill="#5a8296"/><rect x="31.20" y="121.66" width="12.48" height="1.05" fill="#8a5c49"/><rect x="18.72" y="123.24" width="9.36" height="1.05" fill="#5a8296"/><rect x="31.20" y="123.24" width="9.36" height="1.05" fill="#8a5c49"/><rect x="18.72" y="124.82" width="10.14" height="1.05" fill="#5a8296"/><rect x="31.20" y="124.82" width="10.14" height="1.05" fill="#8a5c49"/><rect x="18.72" y="126.40" width="7.02" height="1.05" fill="#5a8296"/><rect x="31.20" y="126.40" width="16.38" height="1.05" fill="#8a5c49"/><rect x="18.72" y="127.98" width="3.90" height="1.05" fill="#5a8296"/><rect x="31.20" y="127.98" width="6.24" height="1.05" fill="#8a5c49"/><rect x="12.48" y="129.56" width="2.34" height="1.05" fill="#777777"/><rect x="9.36" y="132.72" width="12.48" height="1.05" fill="#5a8296"/><rect x="21.84" y="132.72" width="9.36" height="1.05" fill="#8c8c6e"/><rect x="12.48" y="134.30" width="3.90" height="1.05" fill="#5a8296"/><rect x="17.16" y="134.30" width="14.04" height="1.05" fill="#8a5c49"/><rect x="12.48" y="135.88" width="4.68" height="1.05" fill="#5a8296"/><rect x="17.94" y="135.88" width="6.24" height="1.05" fill="#8a5c49"/><rect x="12.48" y="137.46" width="5.46" height="1.05" fill="#5a8296"/><rect x="18.72" y="137.46" width="6.24" height="1.05" fill="#8a5c49"/><rect x="6.24" y="139.04" width="0.78" height="1.05" fill="#777777"/><rect x="6.24" y="142.20" width="17.94" height="1.05" fill="#2f5f86"/><rect x="24.96" y="142.20" width="3.90" height="1.05" fill="#8c8c6e"/><rect x="28.86" y="142.20" width="12.48" height="1.05" fill="#2c7a6c"/><rect x="42.12" y="142.20" width="11.88" height="1.05" fill="#5a8296"/><rect x="6.24" y="143.78" width="0.78" height="1.05" fill="#777777"/><rect x="9.36" y="145.36" width="12.48" height="1.05" fill="#5a8296"/><rect x="21.84" y="145.36" width="8.58" height="1.05" fill="#8c8c6e"/><rect x="12.48" y="146.94" width="3.90" height="1.05" fill="#5a8296"/><rect x="17.16" y="146.94" width="7.02" height="1.05" fill="#8a5c49"/><rect x="12.48" y="148.52" width="4.68" height="1.05" fill="#5a8296"/><rect x="17.94" y="148.52" width="6.24" height="1.05" fill="#8a5c49"/><rect x="9.36" y="151.68" width="12.48" height="1.05" fill="#5a8296"/><rect x="21.84" y="151.68" width="8.58" height="1.05" fill="#8c8c6e"/><rect x="12.48" y="153.26" width="3.90" height="1.05" fill="#5a8296"/><rect x="17.16" y="153.26" width="8.58" height="1.05" fill="#8a5c49"/><rect x="12.48" y="154.84" width="4.68" height="1.05" fill="#5a8296"/><rect x="17.94" y="154.84" width="6.24" height="1.05" fill="#8a5c49"/><rect x="9.36" y="158.00" width="12.48" height="1.05" fill="#5a8296"/><rect x="21.84" y="158.00" width="8.58" height="1.05" fill="#8c8c6e"/><rect x="12.48" y="159.58" width="3.90" height="1.05" fill="#5a8296"/><rect x="17.16" y="159.58" width="6.24" height="1.05" fill="#8a5c49"/><rect x="12.48" y="161.16" width="4.68" height="1.05" fill="#5a8296"/><rect x="17.94" y="161.16" width="6.24" height="1.05" fill="#8a5c49"/><rect x="9.36" y="164.32" width="12.48" height="1.05" fill="#5a8296"/><rect x="21.84" y="164.32" width="8.58" height="1.05" fill="#8c8c6e"/><rect x="12.48" y="165.90" width="3.90" height="1.05" fill="#5a8296"/><rect x="17.16" y="165.90" width="7.02" height="1.05" fill="#8a5c49"/><rect x="12.48" y="167.48" width="4.68" height="1.05" fill="#5a8296"/><rect x="17.94" y="167.48" width="6.24" height="1.05" fill="#8a5c49"/><rect x="9.36" y="170.64" width="12.48" height="1.05" fill="#5a8296"/><rect x="21.84" y="170.64" width="8.58" height="1.05" fill="#8c8c6e"/><rect x="12.48" y="172.22" width="3.90" height="1.05" fill="#5a8296"/><rect x="17.16" y="172.22" width="7.80" height="1.05" fill="#8a5c49"/><rect x="12.48" y="173.80" width="4.68" height="1.05" fill="#5a8296"/><rect x="17.94" y="173.80" width="6.24" height="1.05" fill="#8a5c49"/><rect x="9.36" y="176.96" width="12.48" height="1.05" fill="#5a8296"/><rect x="21.84" y="176.96" width="8.58" height="1.05" fill="#8c8c6e"/><rect x="12.48" y="178.54" width="3.90" height="1.05" fill="#5a8296"/><rect x="17.16" y="178.54" width="4.68" height="1.05" fill="#8a5c49"/><rect x="12.48" y="180.12" width="4.68" height="1.05" fill="#5a8296"/><rect x="17.94" y="180.12" width="6.24" height="1.05" fill="#8a5c49"/><rect x="9.36" y="183.28" width="12.48" height="1.05" fill="#5a8296"/><rect x="21.84" y="183.28" width="8.58" height="1.05" fill="#8c8c6e"/><rect x="12.48" y="184.86" width="3.90" height="1.05" fill="#5a8296"/><rect x="17.16" y="184.86" width="8.58" height="1.05" fill="#8a5c49"/><rect x="12.48" y="186.44" width="4.68" height="1.05" fill="#5a8296"/><rect x="17.94" y="186.44" width="6.24" height="1.05" fill="#8a5c49"/><rect x="9.36" y="189.60" width="12.48" height="1.05" fill="#5a8296"/><rect x="21.84" y="189.60" width="8.58" height="1.05" fill="#8c8c6e"/><rect x="12.48" y="191.18" width="3.90" height="1.05" fill="#5a8296"/><rect x="17.16" y="191.18" width="6.24" height="1.05" fill="#8a5c49"/><rect x="12.48" y="192.76" width="4.68" height="1.05" fill="#5a8296"/><rect x="17.94" y="192.76" width="6.24" height="1.05" fill="#8a5c49"/><rect x="9.36" y="195.92" width="12.48" height="1.05" fill="#5a8296"/><rect x="21.84" y="195.92" width="8.58" height="1.05" fill="#8c8c6e"/><rect x="12.48" y="197.50" width="3.90" height="1.05" fill="#5a8296"/><rect x="17.16" y="197.50" width="6.24" height="1.05" fill="#8a5c49"/><rect x="12.48" y="199.08" width="4.68" height="1.05" fill="#5a8296"/><rect x="17.94" y="199.08" width="6.24" height="1.05" fill="#8a5c49"/><rect x="9.36" y="202.24" width="12.48" height="1.05" fill="#5a8296"/><rect x="21.84" y="202.24" width="8.58" height="1.05" fill="#8c8c6e"/><rect x="12.48" y="203.82" width="3.90" height="1.05" fill="#5a8296"/><rect x="17.16" y="203.82" width="5.46" height="1.05" fill="#8a5c49"/><rect x="12.48" y="205.40" width="4.68" height="1.05" fill="#5a8296"/><rect x="17.94" y="205.40" width="6.24" height="1.05" fill="#8a5c49"/><rect x="9.36" y="208.56" width="12.48" height="1.05" fill="#5a8296"/><rect x="21.84" y="208.56" width="8.58" height="1.05" fill="#8c8c6e"/><rect x="12.48" y="210.14" width="3.90" height="1.05" fill="#5a8296"/><rect x="17.16" y="210.14" width="7.80" height="1.05" fill="#8a5c49"/><rect x="12.48" y="211.72" width="4.68" height="1.05" fill="#5a8296"/><rect x="17.94" y="211.72" width="6.24" height="1.05" fill="#8a5c49"/><rect x="6.24" y="214.88" width="0.78" height="1.05" fill="#777777"/><rect x="3.12" y="216.46" width="0.78" height="1.05" fill="#777777"/><rect x="0.00" y="218.04" width="0.78" height="1.05" fill="#777777"/></svg>
<div class="abs" style="left:674.2px;top:0;width:10.2px;height:503.3px;background:#1e1e1e;border-left:1.2px solid #2f2f2f;box-sizing:border-box"></div>
<div class="abs" style="left:674.4px;top:0;width:10.0px;height:76.3px;background:#3e3e3e"></div>
<div class="abs" style="left:65.0px;top:495.4px;width:408.4px;height:9px;background:rgba(125,125,125,0.3)"></div>
</div>
<div id="status">
<svg class="abs" style="left:9.50px;top:3.30px;" width="7.2" height="9.8" viewBox="0 0 9 12"><circle cx="2.2" cy="2" r="1.25" fill="none" stroke="#e8f0fa" stroke-width="1.15"/><circle cx="2.2" cy="10" r="1.25" fill="none" stroke="#e8f0fa" stroke-width="1.15"/><circle cx="6.6" cy="3.6" r="1.25" fill="none" stroke="#e8f0fa" stroke-width="1.15"/><path d="M2.2 3.2 V8.8 M6.6 4.8 Q6.4 7 2.4 8" fill="none" stroke="#e8f0fa" stroke-width="1.2"/></svg>
<svg class="abs" style="left:65.80px;top:3.50px;" width="12" height="10" viewBox="0 0 12 10"><path d="M3.4 8.2 H2.8 Q0.8 8.2 0.8 6.3 Q0.8 4.6 2.6 4.4 Q2.8 1.2 5.8 1.2 Q8.2 1.2 8.8 3.4 Q11 3.4 11 5.8 Q11 8.2 8.8 8.2 H8.2" fill="none" stroke="#e6effa" stroke-width="1"/><path d="M5.8 9.6 V5 M3.9 6.6 L5.8 4.6 L7.7 6.6" fill="none" stroke="#e6effa" stroke-width="1.05"/></svg>
<svg class="abs" style="left:87.20px;top:4.70px;" width="8.9" height="8.9" viewBox="0 0 9.4 9.4"><circle cx="4.7" cy="4.7" r="4.4" fill="#ffffff"/><path d="M2.9 2.9 L6.5 6.5 M6.5 2.9 L2.9 6.5" stroke="#1c6dc8" stroke-width="1.35"/></svg>
<svg class="abs" style="left:108.70px;top:4.60px;" width="9.1" height="8.9" viewBox="0 0 9.6 9.4"><path d="M4.8 0.5 L9.2 8.9 H0.4 Z" fill="#ffffff"/><path d="M4.8 3.2 V6.3 M4.8 7.1 V8.1" stroke="#1c6dc8" stroke-width="1.1"/></svg>
<svg class="abs" style="left:136.80px;top:3.30px;" width="9.4" height="11" viewBox="0 0 9.4 11"><path d="M4.9 0.3 Q6 2.4 7.6 4 Q9.2 5.8 8.6 8 Q8 10.2 5.6 10.7 Q6.8 8.6 5 6.8 Q4.2 8 4 9 Q3.2 10 3.6 10.7 Q1 10 0.6 7.6 Q0.4 5.8 1.8 4.4 Q2 5.4 2.8 5.8 Q2.6 2.6 4.9 0.3 Z" fill="#2fbf3d"/></svg>
<svg class="abs" style="left:955.00px;top:2.80px;" width="13" height="13" viewBox="0 0 13 13"><circle cx="6.5" cy="6.5" r="5.2" fill="none" stroke="#ffffff" stroke-width="1.2"/><circle cx="4.7" cy="5.2" r="0.9" fill="#fff"/><circle cx="8.3" cy="5.2" r="0.9" fill="#fff"/><path d="M3.7 7.6 Q6.5 10.6 9.3 7.6" fill="none" stroke="#fff" stroke-width="1.1"/></svg>
<svg class="abs" style="left:979.10px;top:4.30px;" width="11" height="10.4" viewBox="0 0 11 10.4"><path d="M5.5 0.6 Q8.2 0.8 8.4 3.8 Q8.5 6.2 10.2 7.2 V7.9 H0.8 V7.2 Q2.5 6.2 2.6 3.8 Q2.8 0.8 5.5 0.6 Z" fill="#ffffff"/><path d="M4.3 8.6 Q5.5 10.2 6.7 8.6 Z" fill="#fff"/></svg>
<svg class="abs" style="left:956.00px;top:-2.70px;" width="14" height="10" viewBox="0 0 14 10"><path d="M0.8 5.6 L4 0.5 L6 4.6 L4.6 5.2 L3.8 3.4 L2.4 5.8 Z" fill="rgba(255,255,255,0.42)"/><path d="M7.6 1.6 L9.4 1.2 L9.8 6.2 Q10 7.6 11.2 7.4 L12.6 6.8 L12.8 8 L11 8.8 Q8.4 9.2 8.1 6.4 Z" fill="rgba(255,255,255,0.42)"/></svg>
<span style="left:19.8px;font-size:10.5px;letter-spacing:-0.1px;line-height:15.4px">master*</span>
<span style="left:98.9px">0</span><span style="left:120.9px">0</span>
<span style="left:710.3px">Ln 1, Col 1</span><span style="left:767.3px">Spaces: 4</span><span style="left:822.8px">UTF-8 with BOM</span><span style="left:908.4px">LF</span><span style="left:930.8px">C#</span>
<span style="left:972px;top:-0.8px;line-height:10px;font-size:6.3px;font-weight:bold;color:rgba(255,255,255,0.42);letter-spacing:0.55px;-webkit-text-stroke:0">Udemy</span>
</div>
<svg class="abs" style="left:994.20px;top:288.30px;" width="8" height="13" viewBox="0 0 8 13"><path d="M0.8 0.8 L0.8 10.4 L3 8.3 L4.6 11.8 L6 11.2 L4.5 7.8 L7.4 7.8 Z" fill="#111" stroke="#e8e8e8" stroke-width="0.8"/></svg>
<svg class="abs" style="left:467.50px;top:352.20px;" width="8" height="12" viewBox="0 0 8 12"><path d="M1.6 0.8 Q3.6 0.8 4 2 Q4.4 0.8 6.4 0.8 M4 2 V10 M1.6 11.2 Q3.6 11.2 4 10 Q4.4 11.2 6.4 11.2 M2.8 6.4 H5.2" fill="none" stroke="#d8d8d8" stroke-width="0.8"/></svg>
</div></body></html>
